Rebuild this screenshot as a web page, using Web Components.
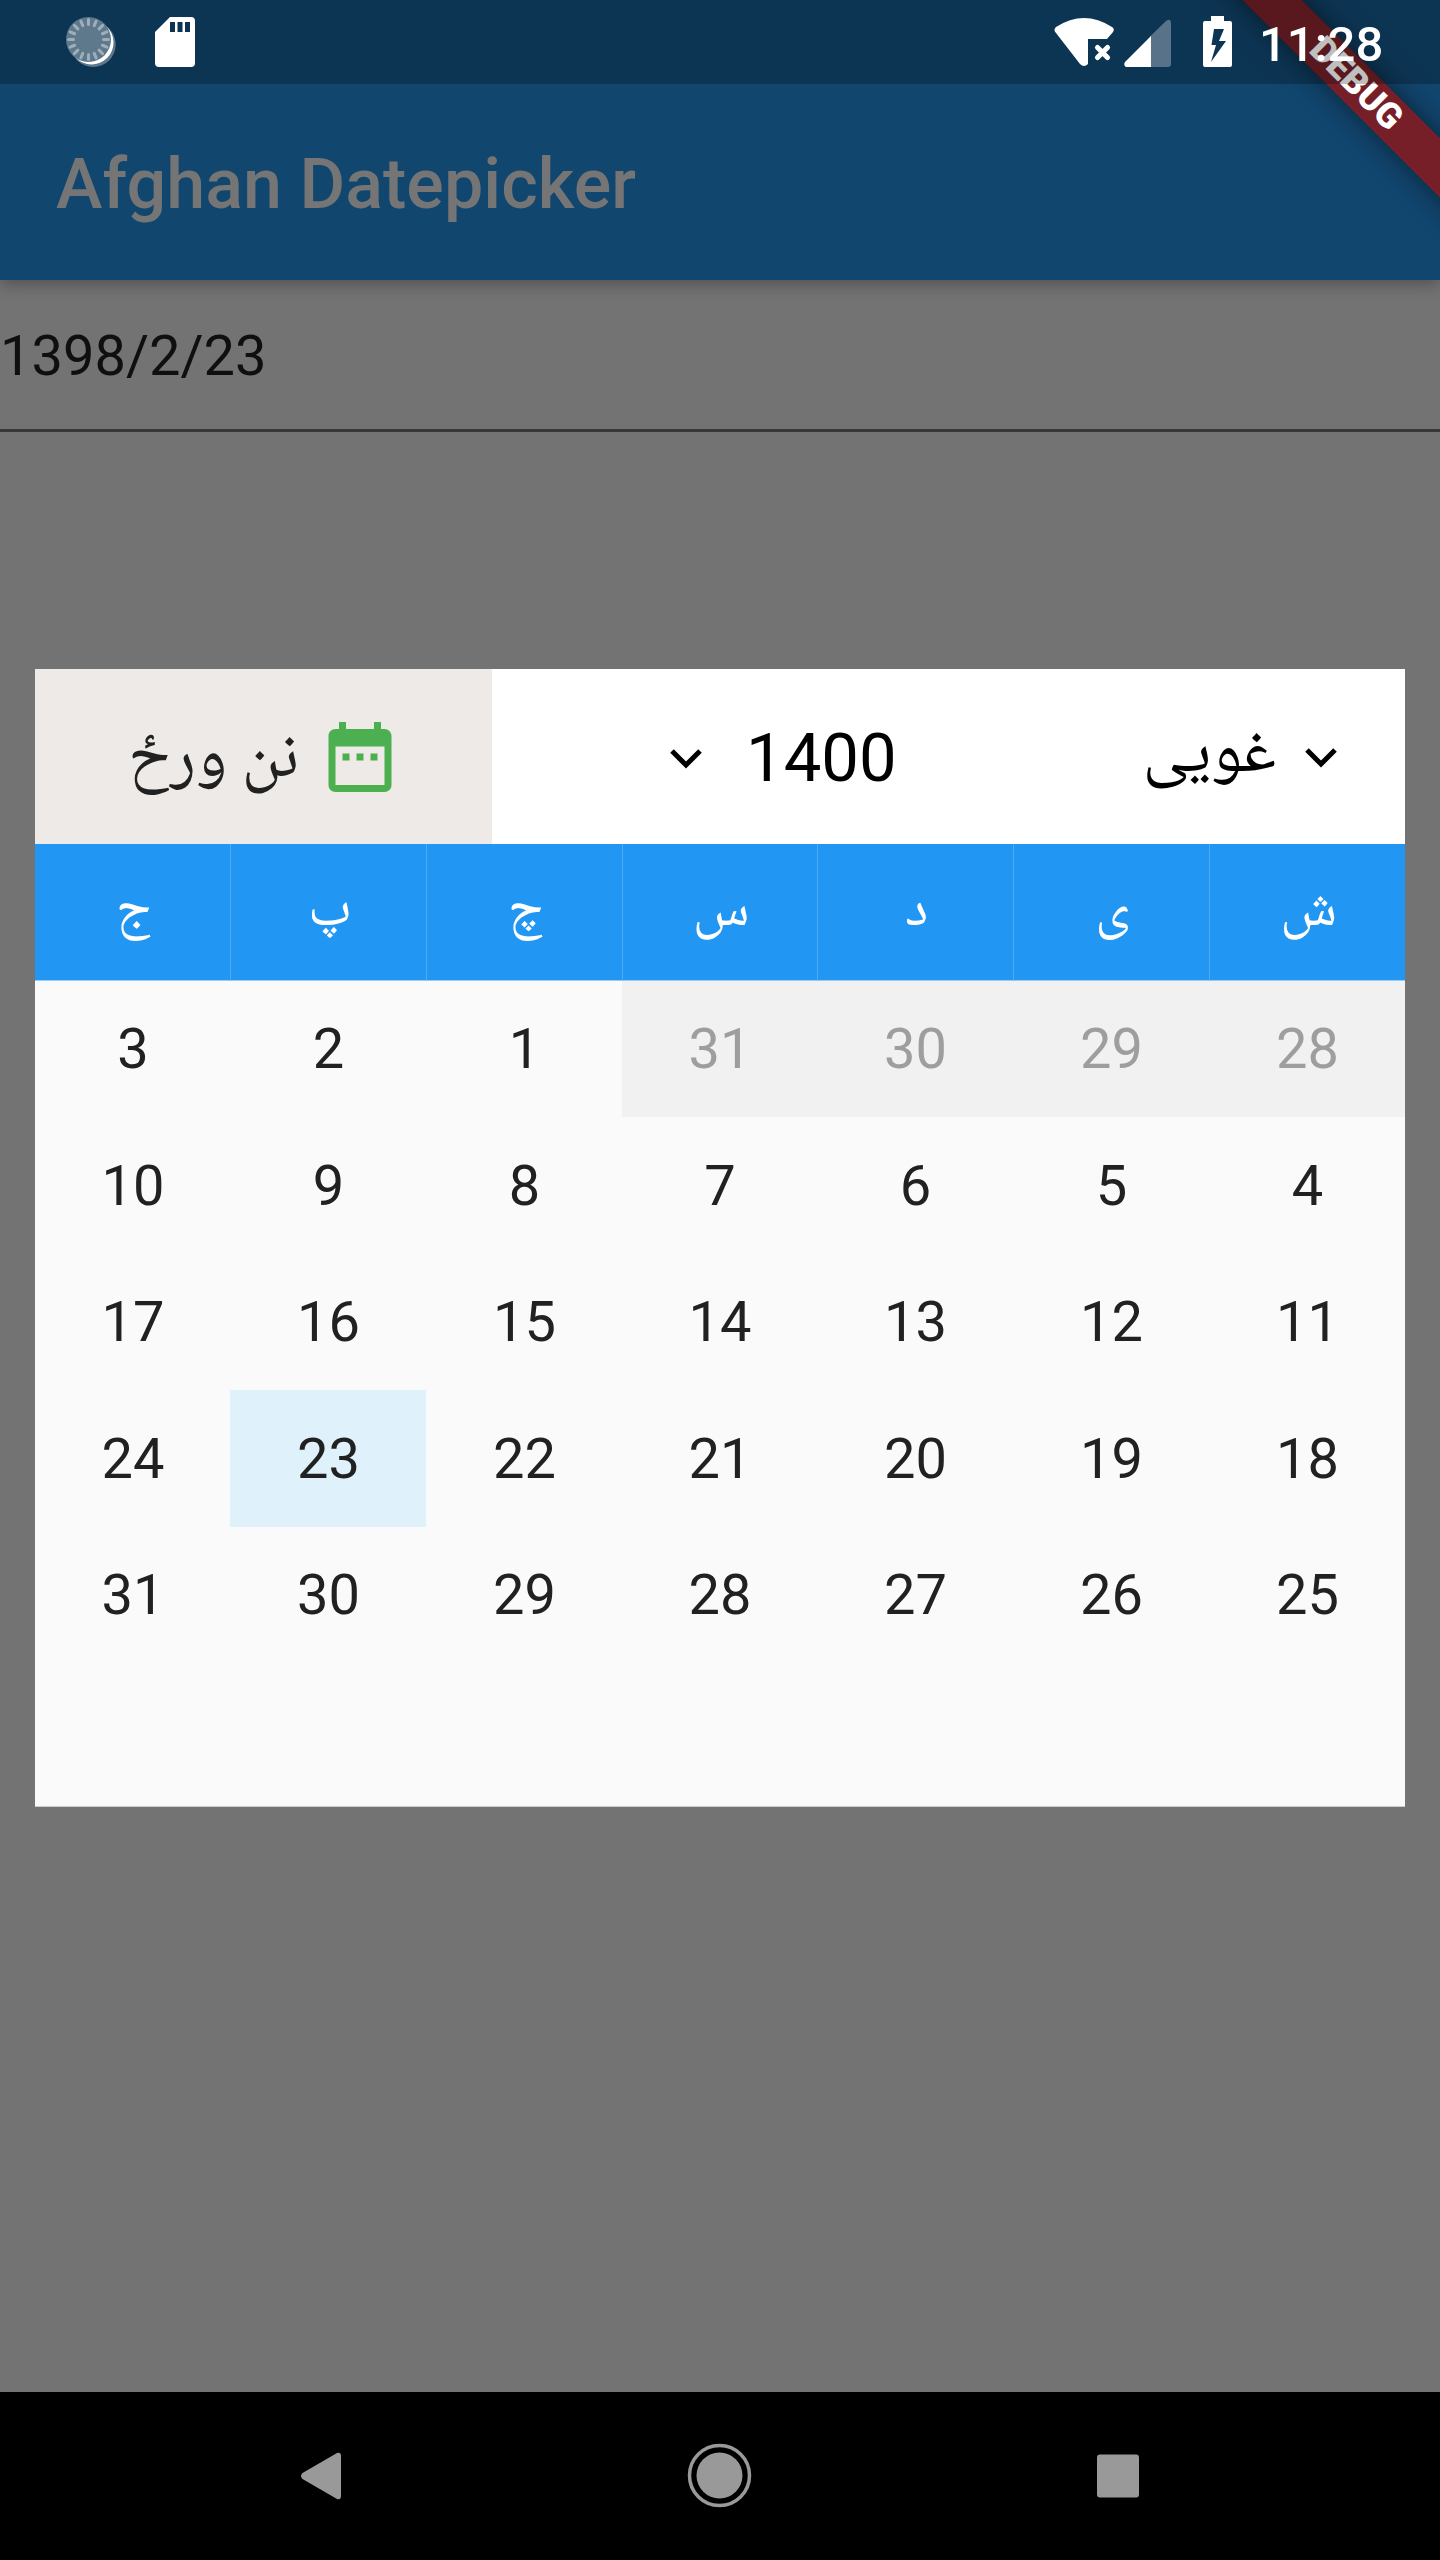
<!DOCTYPE html>
<html lang="ps"><head><meta charset="utf-8"><title>Afghan Datepicker</title>
<style>html,body{margin:0;background:#737373}body{width:1440px;height:2560px;overflow:hidden;font-family:Roboto,sans-serif}</style></head>
<body><datepicker-app></datepicker-app>
<script>
const define=(name,html)=>customElements.define(name,class extends HTMLElement{
  constructor(){super();this.attachShadow({mode:'open'}).innerHTML=html;}
});
const rays=Array.from({length:16},(_,i)=>`<path d="M88.500 19.500v5" transform="rotate(${i*22.5} 88.500 39.500)"/>`).join('');
define('status-bar',`<style>
:host{display:flex;justify-content:space-between;height:84px;margin-bottom:-84px;position:relative;z-index:5;background:#00000040;color:#fff}
svg{display:block}.right{display:flex}
time{font:500 49px/84px Roboto,sans-serif;width:181px;margin-left:-1px;padding-top:3px;box-sizing:border-box;height:84px}
</style>
<svg width="300" height="84" viewBox="0 0 300 84">
<circle cx="93.200" cy="44.500" r="22.500" fill="#5e788c"/><circle cx="91.500" cy="42.500" r="22" fill="#fff"/><circle cx="88.500" cy="39.500" r="22.500" fill="#5e788c"/>
<g stroke="#9eaebb" stroke-width="3" stroke-linecap="round">${rays}</g>
<path d="M170 17h21q4 0 4 4v42q0 4-4 4h-32q-4 0-4-4V32z" fill="#fff"/><path d="M170 22h5v10h-5zM177.500 22h5v10h-5zM185 22h5v10h-5z" fill="#0c3452"/></svg>
<div class="right"><svg width="210" height="84" viewBox="1050 0 210 84" fill="#fff">
<path d="M1056 27q-3 3 0 6l24 31q4 4 8 0V39h19l6-7q2-3-1-5-28-18-56 0z"/>
<path d="m1097.500 47.500 10 10m0-10-10 10" stroke="#fff" stroke-width="5.200" stroke-linecap="round"/>
<path d="M1171 22v42q0 3-3 3h-18V36.500l16-15.500q4-3 5 1z" fill="#587389"/><path d="M1151 36v31h-25q-3-2-1-5z"/>
<path fill-rule="evenodd" d="M1211 16h13v5h6q2 0 2 2v42q0 2-2 2h-25q-2 0-2-2V23q0-2 2-2h6zM1214 29l-2.500 16h4.500l-5 17 15-21h-7l5-12z"/></svg><time>11:28</time></div>`);
define('app-header',`<style>:host{display:flex;align-items:center;box-sizing:border-box;height:280px;background:#11466f;box-shadow:0 4px 16px #0000004d;padding:88px 0 0 56px;color:#757575;font:500 70px/82px Roboto,sans-serif;letter-spacing:.06px}</style><span><slot></slot></span>`);
define('date-field',`<style>:host{display:flex;align-items:center;box-sizing:border-box;height:152px;padding-top:3px;border-bottom:3px solid #373737;color:#0f0f0f;font:400 56px/66px Roboto,sans-serif}</style><span><slot></slot></span>`);
define('debug-ribbon',`<style>:host{position:absolute;z-index:4;right:0;top:0;width:240px;height:280px;overflow:hidden}
div{position:absolute;width:520px;height:42px;left:-104px;top:62.500px;transform:rotate(45deg);background:#771f29;box-shadow:0 0 28px #00000080;color:#fff;font:900 35.700px/40px Roboto,sans-serif;text-align:center}
</style><div><slot></slot></div>`);
const chevron='<svg width="32" height="20" viewBox="0 0 32 20"><path d="m2 2 14 14L30 2" fill="none" stroke="#000" stroke-width="5"/></svg>';
define('picker-toolbar',`<style>:host{display:flex;height:175px;background:#fff;color:#000}
.today{width:457px;background:#eeeae7;color:#212121;display:flex;align-items:center;justify-content:flex-end;font-size:66.500px;box-sizing:border-box;padding:1px 90px 0 0;gap:19px}
.today .ar{padding-top:8px}
.year{width:457px;display:flex;align-items:center;box-sizing:border-box;padding:3px 0 0 178px;gap:44px;font:400 67px/80px Roboto,sans-serif}
.year svg{margin-top:2px}
.month{flex:1;display:flex;align-items:center;justify-content:flex-end;padding:0 68px 0 0;gap:29px;font-size:66.500px}
.month svg{margin-top:3px}
.ar{font-family:"Noto Naskh Arabic","Noto Sans Arabic","DejaVu Sans",sans-serif;direction:rtl}svg{flex:none}</style>
<div class="today"><span class="ar">نن ورځ</span><svg width="84" height="84" viewBox="0 0 24 24" fill="#4caf50"><path d="M9 11H7v2h2zm4 0h-2v2h2zm4 0h-2v2h2zm2-7h-1V2h-2v2H8V2H6v2H5c-1.110 0-2 .9-2 2v14c0 1.100.89 2 2 2h14c1.100 0 2-.9 2-2V6c0-1.100-.9-2-2-2zm0 16H5V9h14z"/></svg></div>
<div class="year">${chevron}<span>1400</span></div>
<div class="month"><span class="ar">غویی</span>${chevron}</div>`);
customElements.define('calendar-grid',class extends HTMLElement{
 constructor(){super();
 const names=['ج','پ','چ','س','د','ی','ش'];
 const rows=[[3,2,1,31,30,29,28],[10,9,8,7,6,5,4],[17,16,15,14,13,12,11],[24,23,22,21,20,19,18],[31,30,29,28,27,26,25]];
 this.attachShadow({mode:'open'}).innerHTML=`<style>
:host{display:grid;grid-template-columns:195px 196px 196px 195px 196px 196px 196px;grid-auto-rows:136.500px;font:400 56px/66px Roboto,sans-serif;color:#212121}
div{display:flex;align-items:center;justify-content:center;box-sizing:border-box;padding:1px 0 0 1px}
.h{background:#2196f3;color:#fff;font-family:"Noto Naskh Arabic","Noto Sans Arabic","DejaVu Sans",sans-serif;border-bottom:1px solid #96cdf8;padding:3px 0 0 2px}
.h:first-child{padding-left:3px}
.h+.h{border-left:1px solid #4daaf5}.out{background:#f1f1f1;color:#9e9e9e}.out+.out{border-left:1px solid #f3f3f3;padding-left:0}.sel{background:#dff1fb}</style>`+
 names.map(n=>`<div class="h"><span>${n}</span></div>`).join('')+
 rows.map((r,i)=>r.map(d=>`<div class="${i==0&&d>20?'out':d==23?'sel':''}">${d}</div>`).join('')).join('');}
});
define('picker-dialog',`<style>:host{display:block;margin:237px 35px 0;height:1137px;background:#fafafa;border-bottom:1px solid #ccd0cd}</style><picker-toolbar></picker-toolbar><calendar-grid></calendar-grid>`);
define('system-nav',`<style>:host{display:flex;justify-content:center;height:168px;background:#000;margin-top:auto}svg{display:block}</style>
<svg width="1440" height="168" viewBox="0 2392 1440 168" fill="#999"><path d="M337 2453q4-1 4 3v40q0 4-4 3l-34.500-20q-3-3 0-6z"/><circle cx="719.500" cy="2475.500" r="23"/><circle cx="719.500" cy="2475.500" r="30" fill="none" stroke="#999" stroke-width="3.500"/><rect x="1097" y="2454.500" width="42" height="43" rx="3"/></svg>`);
define('datepicker-app',`<style>:host{display:flex;flex-direction:column;position:relative;width:1440px;height:2560px;background:#737373}</style>
<status-bar></status-bar><app-header>Afghan Datepicker</app-header><date-field>1398/2/23</date-field><picker-dialog></picker-dialog><system-nav></system-nav><debug-ribbon>DEBUG</debug-ribbon>`);
</script></body></html>
